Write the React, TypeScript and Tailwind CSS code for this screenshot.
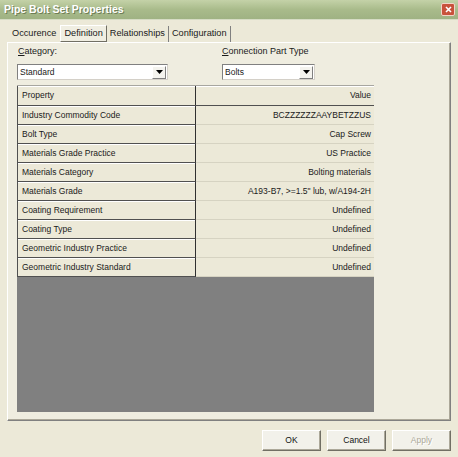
import React from "react";

const rows: [string, string][] = [
  ["Industry Commodity Code", "BCZZZZZZAAYBETZZUS"],
  ["Bolt Type", "Cap Screw"],
  ["Materials Grade Practice", "US Practice"],
  ["Materials Category", "Bolting materials"],
  ["Materials Grade", "A193-B7, >=1.5\" lub, w/A194-2H"],
  ["Coating Requirement", "Undefined"],
  ["Coating Type", "Undefined"],
  ["Geometric Industry Practice", "Undefined"],
  ["Geometric Industry Standard", "Undefined"],
];

function DropBtn() {
  return (
    <div className="w-[14px] h-[13px] bg-[#f4f3ee] border-t border-l border-[#ffffff] border-r border-b border-r-[#808080] border-b-[#808080] flex items-center justify-center">
      <svg width="7" height="4" viewBox="0 0 7 4">
        <path d="M0 0 H7 L3.5 4 Z" fill="#000" />
      </svg>
    </div>
  );
}

function Select({ value, w }: { value: string; w: string }) {
  return (
    <div className={`${w} h-[16px] bg-white border border-t-[#808080] border-l-[#808080] border-r-[#d4d0c8] border-b-[#d4d0c8] flex items-center justify-between pl-[2px] pr-[1px]`}>
      <span className="leading-none">{value}</span>
      <DropBtn />
    </div>
  );
}

function Btn({ label, disabled }: { label: string; disabled?: boolean }) {
  return (
    <div className="w-[59px] h-[21px] bg-[#f2f1ea] border border-t-white border-l-white border-r-[#716f64] border-b-[#716f64] shadow-[inset_-1px_-1px_0_#aca899] flex items-center justify-center">
      <span className={disabled ? "text-[#aca899] [text-shadow:1px_1px_0_#fff]" : "text-[#111]"}>{label}</span>
    </div>
  );
}

export default function App() {
  return (
    <div className="w-[458px] h-[457px] bg-[#ece9d8] flex flex-col overflow-hidden font-['Liberation_Sans',Arial,sans-serif] text-[8.5px] text-[#1a1a1a]">
      {/* Title bar */}
      <div className="h-[20px] bg-gradient-to-b from-[#c4d2a8] via-[#a9bb8b] to-[#9fb283] border-b border-[#d6dcc4] flex items-center justify-between pl-[4px] pr-[2px]">
        <span className="text-white font-bold text-[10.5px] [text-shadow:1px_1px_0_#6d7d55]">Pipe Bolt Set Properties</span>
        <div className="w-[14px] h-[13px] mr-[1px] rounded-[2px] bg-[#c8523b] border border-[#f2d4c8] flex items-center justify-center">
          <svg width="7" height="7" viewBox="0 0 7 7">
            <path d="M1 1 L6 6 M6 1 L1 6" stroke="#fff" strokeWidth="1.6" />
          </svg>
        </div>
      </div>

      {/* Tabs */}
      <div className="h-[22px] pl-[9px] flex items-end text-[9.2px]">
        <div className="h-[16px] px-[3px] flex items-center">Occurence</div>
        <div className="h-[17px] ml-[1px] px-[3px] flex items-center bg-[#f0eee2] border border-t-white border-l-white border-r-[#716f64] border-b-[#716f64]">Definition</div>
        <div className="h-[16px] px-[3px] flex items-center border-r border-[#808080]">Relationships</div>
        <div className="h-[16px] px-[3px] flex items-center border-r border-[#808080]">Configuration</div>
      </div>

      {/* Tab panel */}
      <div className="ml-[7px] w-[444px] h-[379px] border border-t-white border-l-white border-r-[#808080] border-b-[#808080] shadow-[inset_-1px_-1px_0_#aca899] bg-[#efede0] pl-[9px] pt-[3px]">
        <div className="flex text-[9px]">
          <div className="w-[205px]">
            <div className="h-[11px] leading-[11px] pl-[1px]"><span className="underline">C</span>ategory:</div>
            <div className="mt-[7px] text-[8.5px]"><Select value="Standard" w="w-[151px]" /></div>
          </div>
          <div>
            <div className="h-[11px] leading-[11px]"><span className="underline">C</span>onnection Part Type</div>
            <div className="mt-[7px] text-[8.5px]"><Select value="Bolts" w="w-[93px]" /></div>
          </div>
        </div>

        {/* Grid */}
        <div className="mt-[5px] w-[357px] h-[327px] bg-[#808080] border-t border-[#a7a6a0] flex flex-col">
          <div className="grid grid-cols-[179px_178px] h-[20px] bg-[#ece9d8] border-b border-[#505050]">
            <div className="border-l border-[#505050] border-r border-r-[#303030] flex items-center pl-[4px] shadow-[inset_0_1px_0_#fff]">Property</div>
            <div className="flex items-center justify-end pr-[3px] shadow-[inset_0_1px_0_#fff]">Value</div>
          </div>
          {rows.map(([k, v]) => (
            <div key={k} className="grid grid-cols-[179px_178px] h-[19px] bg-[#ece9d8]">
              <div className="border-l border-[#505050] border-r border-r-[#303030] border-b border-b-[#505050] flex items-center pl-[4px] shadow-[inset_0_1px_0_#fff]">{k}</div>
              <div className="border-b border-[#d6d3c2] flex items-center justify-end pr-[3px]">{v}</div>
            </div>
          ))}
        </div>
      </div>

      {/* Buttons */}
      <div className="mt-[9px] pr-[7px] flex justify-end gap-[6px]">
        <Btn label="OK" />
        <Btn label="Cancel" />
        <Btn label="Apply" disabled />
      </div>
    </div>
  );
}
